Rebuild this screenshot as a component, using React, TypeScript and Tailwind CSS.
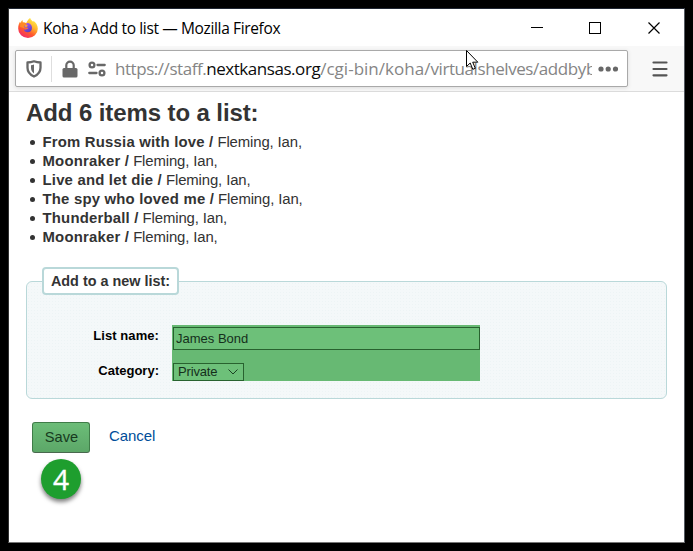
import React from "react";

const books = [
  "From Russia with love /",
  "Moonraker /",
  "Live and let die /",
  "The spy who loved me /",
  "Thunderball /",
  "Moonraker /",
];

function FirefoxLogo() {
  return (
    <svg className="ml-[9px] h-5 w-5 shrink-0" viewBox="0 0 20 20">
      <defs>
        <linearGradient id="fire" x1="0.85" y1="0.05" x2="0.25" y2="1">
          <stop offset="0" stopColor="#fff34f" />
          <stop offset="0.35" stopColor="#ffb62e" />
          <stop offset="0.65" stopColor="#ff5a2c" />
          <stop offset="1" stopColor="#f0256f" />
        </linearGradient>
        <linearGradient id="core" x1="0.2" y1="0" x2="0.6" y2="1">
          <stop offset="0" stopColor="#a75cf0" />
          <stop offset="1" stopColor="#5b3bc0" />
        </linearGradient>
      </defs>
      <path
        fill="url(#fire)"
        d="M12.2 0c.3 1.7 1.8 2.6 3 3.8.3-.2.3-.5.2-1 2.500 1.500 4.400 4.500 4.400 8A9.800 9.200 0 0 1 .2 10.800C.1 7.800 1 5.300 2 3.800l.5 1.500c.3-1.400 1-2.400 2-3.300l.4 2.600c1.400-.4 2.600-.1 3.400.3C9.500 2.700 10.500.8 12.200 0z"
      />
      <path fill="#ff8a26" d="M2.500 5.300C4 4 6.400 4.200 8 5.200l1.500 2L6 10l-4-1z" />
      <path fill="url(#core)" d="M8.500 5.200c2.500-.5 5.500 1.300 5.500 4.600 0 3-2 4.500-4.300 4.500-2.200 0-3.700-1.400-3.900-3.100 1 .8 2.300.5 3-.1.600-.5.900-.6 1.400-.7-.2-.6-1-.8-2.700-.8-.9 0-1.300-.5-1.400-1.200.4-.8 1.600-1.100 2.400-1.600z" />
      <path fill="#ffa62b" d="M7 7.400c.7-.3 1.900-.5 2.600-.2.300.9-.5 1.200-1.600 1.800-.9 0-1.200-.6-1-1.600z" />
    </svg>
  );
}

function TitleBar() {
  return (
    <div className="flex h-[37px] items-center bg-white">
      <FirefoxLogo />
      <span className="ml-[5px] whitespace-nowrap font-['Open_Sans',sans-serif] text-[15.500px] leading-5 tracking-[-0.360px] text-black">
        Koha › Add to list — Mozilla Firefox
      </span>
      <svg className="ml-auto h-[14px] w-[130px] shrink-0" viewBox="0 0 130 14" fill="none" stroke="#000" shapeRendering="crispEdges">
        <path d="M0 6.500h12M58.500 1.500h11v11h-11z" />
        <path d="M117.500 1.500l11 11M128.500 1.500l-11 11" shapeRendering="auto" strokeWidth="1.200" />
      </svg>
      <div className="w-[23px] shrink-0" />
    </div>
  );
}

function Toolbar() {
  return (
    <div className="flex h-[46px] items-start border-b border-[#dcdcdc] bg-[#f8f8f8] pt-1 pl-[6px]">
      <div className="flex h-[37px] w-[613px] shrink-0 items-center rounded-[2px] border border-[#a9a9a9] bg-white shadow-[0_1px_4px_rgba(0,0,0,0.12)]">
        <svg className="ml-[10px] h-[18px] w-4 shrink-0" viewBox="0 0 16 18" fill="none">
          <path d="M8 1.300c2 .8 4 1.200 6.500 1.200v5.300c0 4-2.600 7-6.500 8.700-3.900-1.700-6.500-4.700-6.500-8.700V2.500C4 2.500 6 2.100 8 1.300z" stroke="#686868" strokeWidth="2.300" strokeLinejoin="round" />
          <path d="M8 4.500v9c-2-1.400-3-3.200-3-5.700V5.200c1 0 2-.3 3-.7z" fill="#686868" />
        </svg>
        <div className="ml-[9px] h-[26px] w-px shrink-0 bg-[#dedede]" />
        <svg className="ml-[10px] h-[18px] w-4 shrink-0" viewBox="0 0 16 18">
          <path d="M4.300 9V5.300a3.700 3.700 0 0 1 7.400 0V9" fill="none" stroke="#686868" strokeWidth="2.200" />
          <rect x="0.500" y="8" width="15" height="9.500" rx="1.500" fill="#686868" />
        </svg>
        <svg className="ml-[10px] h-4 w-[18px] shrink-0" viewBox="0 0 18 16" fill="none" stroke="#686868" strokeWidth="2.300">
          <circle cx="4" cy="4" r="2.400" />
          <circle cx="14" cy="12" r="2.400" />
          <path d="M9.500 4h7.200M1.300 12h7.200" strokeLinecap="round" />
        </svg>
        <div className="ml-[9px] w-[477px] shrink-0 overflow-hidden whitespace-nowrap pt-px font-['Open_Sans',sans-serif] text-[17px] leading-6 tracking-[-0.450px] text-[#858585]">
          https://staff.<span className="text-[#0c0c0c]">nextkansas.org</span><span className="tracking-[0.020px]">/cgi-bin/koha/</span><span className="tracking-[-0.420px]">virtualshelves/addbyb</span>
        </div>
        <svg className="ml-[6px] h-2 w-5 shrink-0" viewBox="0 0 20 8" fill="#686868">
          <circle cx="3" cy="4" r="2.600" />
          <circle cx="10.200" cy="4" r="2.600" />
          <circle cx="17.500" cy="4" r="2.600" />
        </svg>
      </div>
      <svg className="mt-[11px] ml-[24px] h-4 w-4 shrink-0" viewBox="0 0 16 16" stroke="#545454" strokeWidth="2.200" strokeLinecap="round">
        <path d="M1.500 1.500h13M1.500 8h13M1.500 14.300h13" />
      </svg>
    </div>
  );
}

function NewListForm() {
  return (
    <div className="ml-[17px] mt-[20px] w-[641px]">
      <div className="relative z-10 ml-[16px] flex h-7 w-[137px] items-center justify-center rounded-[4px] border-2 border-[#b9d8d9] bg-white pt-px text-[14.400px] font-bold whitespace-nowrap text-[#333]">
        Add to a new list:
      </div>
      <div className="-mt-[14px] flex h-[118px] rounded-[6px] border border-[#b9d8d9] bg-[#f4f8f9] bg-[radial-gradient(#edf4f5_0.600px,transparent_0.800px)] bg-[size:3px_3px] pt-[43px]">
        <div className="w-[132px] shrink-0 pt-[2px] text-right text-[13px] leading-[18px] font-bold whitespace-nowrap text-black">
          <div className="tracking-[0.080px]">List name:</div>
          <div className="mt-[17px]">Category:</div>
        </div>
        <div className="ml-[13px] h-14 w-[308px] bg-[#67b973] pt-[2px] pl-px text-[13px] text-[#152f1c]">
          <div className="flex h-[23px] items-center border border-[#28622f] bg-[#6dc079] pl-[2px]">James Bond</div>
          <div className="mt-[13px] flex h-[18px] w-[71px] items-center border border-[#28622f] bg-[#6dc079] pl-[4px] tracking-[-0.150px]">
            <span>Private</span>
            <svg className="ml-auto mr-[5px] h-[6px] w-[10px]" viewBox="0 0 10 6" fill="none" stroke="#1b4223">
              <path d="M.5.5 5 5 9.500.5" />
            </svg>
          </div>
        </div>
      </div>
    </div>
  );
}

export default function App() {
  return (
    <div className="relative h-[551px] w-[693px] overflow-hidden bg-black pt-[8px] pl-[8px] font-['Liberation_Sans',Arial,sans-serif]">
      <div className="h-[535px] w-[677px] overflow-hidden border border-t-[#202632] border-r-[#555a62] border-b-[#777] border-l-[#333] bg-white">
        <TitleBar />
        <Toolbar />
        <h1 className="mt-[7px] ml-[17px] text-[24px] leading-7 font-bold tracking-[-0.100px] whitespace-nowrap text-[#333]">Add 6 items to a list:</h1>
        <ul className="mt-[6px] ml-[21px] text-[14.900px] leading-[19px] text-[#333]">
          {books.map((title, i) => (
            <li key={i} className="flex items-center whitespace-nowrap">
              <span className="mr-[7.500px] h-[5px] w-[5px] rounded-full bg-[#333]" />
              <span className="tracking-[-0.120px]"><b className="tracking-[0.200px]">{title}</b> Fleming, Ian,</span>
            </li>
          ))}
        </ul>
        <NewListForm />
        <div className="mt-[23px] ml-[23px] flex items-start">
          <button className="h-[31px] w-[58px] rounded-[3px] border border-[#3f7c48] border-b-[#49684e] bg-gradient-to-b from-[#6cbd78] to-[#5ca768] pl-px text-[14.600px] leading-[29px] text-[#173b1e]">Save</button>
          <a className="mt-[3px] ml-[19px] text-[15px] leading-[22px] tracking-[-0.080px] text-[#004d99]">Cancel</a>
        </div>
        <div className="mt-[6px] ml-[32px] flex h-10 w-10 items-center justify-center rounded-full bg-[#1e9e2e] font-['Open_Sans',sans-serif] text-[28px] leading-10 text-white shadow-[0_3px_4px_rgba(0,0,0,0.5)] [-webkit-text-stroke:0.400px_white]">4</div>
      </div>
      <svg className="absolute top-[50px] left-[466px] h-[21px] w-[13px]" viewBox="0 0 13 21">
        <path d="M.5.5v16l3.700-3.500 2.600 6.300 2.500-1-2.600-6.100h5.100z" fill="#fff" stroke="#000" />
      </svg>
    </div>
  );
}
